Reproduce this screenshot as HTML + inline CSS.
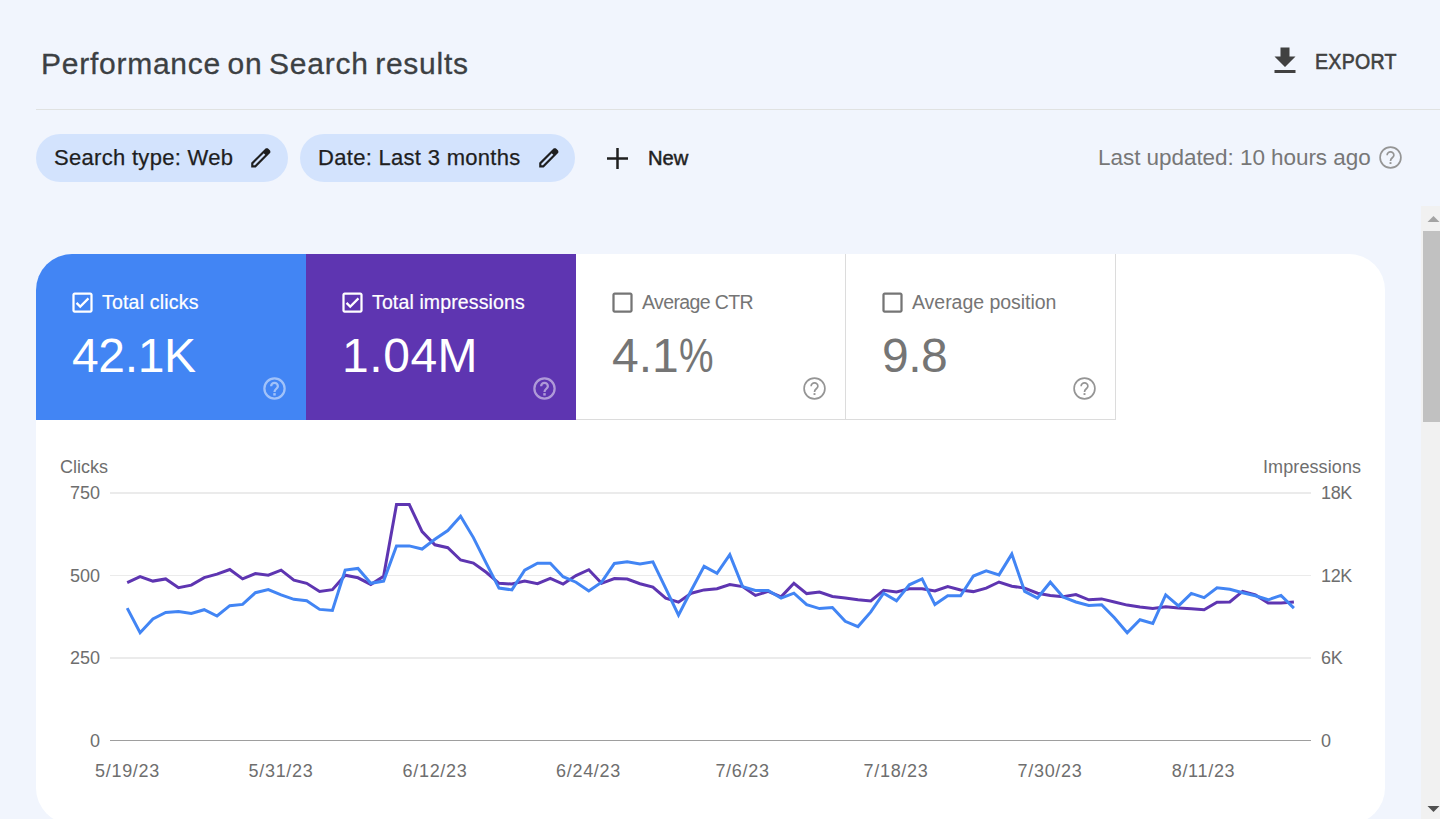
<!DOCTYPE html>
<html lang="en">
<head>
<meta charset="utf-8">
<title>Performance on Search results</title>
<style>
*{box-sizing:border-box;margin:0;padding:0}
html,body{width:1440px;height:819px;overflow:hidden;background:#f1f5fd}
body{position:relative;font-family:"Liberation Sans",sans-serif;color:#3c4043}
.abs{position:absolute;white-space:nowrap;line-height:1}
#title{left:41px;top:49.200px;font-size:30px;color:#3c4043;letter-spacing:0.750px;word-spacing:-2.500px;-webkit-text-stroke:0.300px #3c4043}
#hr{left:36px;top:109px;width:1404px;height:1px;background:#e0e2e1}
.chip{position:absolute;top:134px;height:48px;border-radius:24px;background:#d3e3fd}
.chiptxt{font-size:22px;color:#1f1f1f;top:147.300px;letter-spacing:0.300px;-webkit-text-stroke:0.250px #1f1f1f}
#export{left:1315px;top:52.400px;font-size:21.500px;color:#414141;letter-spacing:0.300px;-webkit-text-stroke:0.600px #414141;transform:scaleX(0.910);transform-origin:0 50%}
#updated{left:1098px;top:146.700px;font-size:22.500px;color:#777;letter-spacing:-0.050px}
#newtxt{left:647.500px;top:147px;font-size:21px;color:#1f1f1f;-webkit-text-stroke:0.500px #1f1f1f;transform:scaleX(0.960);transform-origin:0 50%}
#card{left:36px;top:254px;width:1349px;height:570px;border-radius:36px;background:#fff;overflow:hidden}
.tile{position:absolute;top:0;width:270px;height:166px}
.tlabel{font-size:19.500px;top:39px;left:66px}
.tvalue{font-size:48px;top:78px;left:36px}
.cb{position:absolute;left:36px;top:38px;width:21px;height:20px;border:2px solid #fff;border-radius:3px}
.ax{font-size:18px;color:#6e6e6e}
.yl{right:1340px;left:auto}
.yr{left:1321px;letter-spacing:-0.350px}
.xl{top:762px;transform:translateX(-50%);letter-spacing:0.700px}
.grid{position:absolute;left:110px;width:1201px;height:1.5px;background:#ebebeb}
#sbtrack{left:1421px;top:206px;width:25px;height:613px;background:#f1f1f1}
#sbthumb{left:1423px;top:231px;width:20px;height:191px;background:#c1c1c1}
</style>
</head>
<body>

<div id="title" class="abs">Performance on Search results</div>
<div id="hr" class="abs"></div>

<!-- export -->
<svg class="abs" style="left:1267px;top:42.7px" width="36" height="36" viewBox="0 0 24 24"><path fill="#414141" d="M19 9h-4V3H9v6H5l7 7 7-7zM5 18v2h14v-2H5z"/></svg>
<div id="export" class="abs">EXPORT</div>

<!-- chips -->
<div class="chip" style="left:36px;width:252px"></div>
<div class="abs chiptxt" id="chip1" style="left:54px">Search type: Web</div>
<svg class="abs pencil" style="left:247.800px;top:145.400px" width="25.600" height="25.600" viewBox="0 -960 960 960"><path fill="#1f1f1f" d="M200-200h57l391-391-57-57-391 391v57Zm-80 80v-170l528-527q12-11 26.500-17t30.500-6q16 0 31 6t26 18l55 56q12 11 17.500 26t5.500 30q0 16-5.500 30.500T817-647L290-120H120Zm640-584-56-56 56 56Zm-141 85-28-29 57 57-29-28Z"/></svg>

<div class="chip" style="left:300px;width:275px"></div>
<div class="abs chiptxt" id="chip2" style="left:318px">Date: Last 3 months</div>
<svg class="abs pencil" style="left:536px;top:145.400px" width="25.600" height="25.600" viewBox="0 -960 960 960"><path fill="#1f1f1f" d="M200-200h57l391-391-57-57-391 391v57Zm-80 80v-170l528-527q12-11 26.500-17t30.500-6q16 0 31 6t26 18l55 56q12 11 17.500 26t5.500 30q0 16-5.500 30.500T817-647L290-120H120Zm640-584-56-56 56 56Zm-141 85-28-29 57 57-29-28Z"/></svg>

<svg class="abs" style="left:607px;top:147.5px" width="21" height="21" viewBox="0 0 21 21"><path d="M10.5 0v21M0 10.500h21" stroke="#1f1f1f" stroke-width="2.500" fill="none"/></svg>
<div id="newtxt" class="abs">New</div>

<div id="updated" class="abs">Last updated: 10 hours ago</div>
<svg class="abs" style="left:1377px;top:144.4px;opacity:1" width="27" height="27" viewBox="0 0 24 24"><circle cx="12" cy="12" r="9.25" fill="none" stroke="#959595" stroke-width="1.5"/><path d="M9 10a3 3 0 0 1 6 0c0 2.250-3 2.250-3 5" fill="none" stroke="#959595" stroke-width="1.5"/><rect x="11.15" y="16.100" width="1.70" height="1.70" fill="#959595"/></svg>

<!-- scrollbar -->
<div id="sbtrack" class="abs"></div>
<div id="sbthumb" class="abs"></div>
<svg class="abs" style="left:1427px;top:215px" width="13" height="8" viewBox="0 0 13 8"><path d="M0.500 7L6.500 1L12.500 7z" fill="#a3a3a3"/></svg>
<svg class="abs" style="left:1427px;top:805px" width="13" height="8" viewBox="0 0 13 8"><path d="M0.500 1L6.500 7L12.500 1z" fill="#505050"/></svg>

<!-- card -->
<div id="card" class="abs">
  <div class="tile" style="left:0;background:#4285f4;color:#fff">
    <svg class="abs" style="left:32.600px;top:34.600px" width="27" height="27" viewBox="0 0 24 24"><path fill="#fff" d="M19 3H5c-1.100 0-2 .9-2 2v14c0 1.100.9 2 2 2h14c1.100 0 2-.9 2-2V5c0-1.100-.9-2-2-2zm0 16H5V5h14v14zM17.990 9l-1.410-1.420-6.590 6.590-2.580-2.570-1.420 1.410 4 3.990z"/></svg>
    <div class="abs tlabel" style="letter-spacing:0.200px;-webkit-text-stroke:0.200px #fff">Total clicks</div>
    <div class="abs tvalue" style="letter-spacing:-0.350px">42.1K</div>
    <svg class="abs" style="left:225px;top:120.9px;opacity:0.5" width="27" height="27" viewBox="0 0 24 24"><circle cx="12" cy="12" r="9.00" fill="none" stroke="#fff" stroke-width="2"/><path d="M9 10a3 3 0 0 1 6 0c0 2.250-3 2.250-3 5" fill="none" stroke="#fff" stroke-width="2"/><rect x="10.90" y="16.100" width="2.20" height="2.20" fill="#fff"/></svg>
  </div>
  <div class="tile" style="left:270px;background:#5e35b1;color:#fff">
    <svg class="abs" style="left:32.600px;top:34.600px" width="27" height="27" viewBox="0 0 24 24"><path fill="#fff" d="M19 3H5c-1.100 0-2 .9-2 2v14c0 1.100.9 2 2 2h14c1.100 0 2-.9 2-2V5c0-1.100-.9-2-2-2zm0 16H5V5h14v14zM17.990 9l-1.410-1.420-6.590 6.590-2.580-2.570-1.420 1.410 4 3.990z"/></svg>
    <div class="abs tlabel" style="letter-spacing:0.130px;-webkit-text-stroke:0.200px #fff">Total impressions</div>
    <div class="abs tvalue" style="letter-spacing:0.550px">1.04M</div>
    <svg class="abs" style="left:225px;top:120.9px;opacity:0.5" width="27" height="27" viewBox="0 0 24 24"><circle cx="12" cy="12" r="9.00" fill="none" stroke="#fff" stroke-width="2"/><path d="M9 10a3 3 0 0 1 6 0c0 2.250-3 2.250-3 5" fill="none" stroke="#fff" stroke-width="2"/><rect x="10.90" y="16.100" width="2.20" height="2.20" fill="#fff"/></svg>
  </div>
  <div class="tile" style="left:540px;color:#757575;border-right:1px solid #dcdcdc;border-bottom:1px solid #dcdcdc">
    <svg class="abs" style="left:32.600px;top:34.600px" width="27" height="27" viewBox="0 0 24 24"><path fill="#757575" d="M19 5v14H5V5h14m0-2H5c-1.100 0-2 .9-2 2v14c0 1.100.9 2 2 2h14c1.100 0 2-.9 2-2V5c0-1.100-.9-2-2-2z"/></svg>
    <div class="abs tlabel" style="letter-spacing:-0.620px">Average CTR</div>
    <div class="abs tvalue">4.1<span style="display:inline-block;transform:scaleX(0.810);transform-origin:0 50%">%</span></div>
    <svg class="abs" style="left:225px;top:120.9px;opacity:1" width="27" height="27" viewBox="0 0 24 24"><circle cx="12" cy="12" r="9.25" fill="none" stroke="#959595" stroke-width="1.5"/><path d="M9 10a3 3 0 0 1 6 0c0 2.250-3 2.250-3 5" fill="none" stroke="#959595" stroke-width="1.5"/><rect x="11.15" y="16.100" width="1.70" height="1.70" fill="#959595"/></svg>
  </div>
  <div class="tile" style="left:810px;color:#757575;border-right:1px solid #dcdcdc;border-bottom:1px solid #dcdcdc">
    <svg class="abs" style="left:32.600px;top:34.600px" width="27" height="27" viewBox="0 0 24 24"><path fill="#757575" d="M19 5v14H5V5h14m0-2H5c-1.100 0-2 .9-2 2v14c0 1.100.9 2 2 2h14c1.100 0 2-.9 2-2V5c0-1.100-.9-2-2-2z"/></svg>
    <div class="abs tlabel" style="letter-spacing:-0.030px">Average position</div>
    <div class="abs tvalue" style="letter-spacing:-0.500px">9.8</div>
    <svg class="abs" style="left:225px;top:120.9px;opacity:1" width="27" height="27" viewBox="0 0 24 24"><circle cx="12" cy="12" r="9.25" fill="none" stroke="#959595" stroke-width="1.5"/><path d="M9 10a3 3 0 0 1 6 0c0 2.250-3 2.250-3 5" fill="none" stroke="#959595" stroke-width="1.5"/><rect x="11.15" y="16.100" width="1.70" height="1.70" fill="#959595"/></svg>
  </div>
</div>

<!-- chart -->
<div class="abs ax" id="lclicks" style="left:60px;top:458px">Clicks</div>
<div class="abs ax" id="limpr" style="left:1263px;top:458px;letter-spacing:0.100px">Impressions</div>
<div class="grid" style="top:492px"></div>
<div class="grid" style="top:574.500px"></div>
<div class="grid" style="top:657px"></div>
<div class="grid" id="base" style="top:739.500px;height:1px;background:#9e9e9e"></div>
<div class="abs ax yl" id="y750" style="top:484px">750</div>
<div class="abs ax yl" id="y500" style="top:566.500px">500</div>
<div class="abs ax yl" id="y250" style="top:649px">250</div>
<div class="abs ax yl" id="y0" style="top:731.500px">0</div>
<div class="abs ax yr" id="r18" style="top:484px">18K</div>
<div class="abs ax yr" id="r12" style="top:566.500px">12K</div>
<div class="abs ax yr" id="r6" style="top:649px">6K</div>
<div class="abs ax yr" id="r0" style="top:731.500px">0</div>
<div class="abs ax xl" id="x0" style="left:127.500px">5/19/23</div>
<div class="abs ax xl" id="x1" style="left:281px">5/31/23</div>
<div class="abs ax xl" id="x2" style="left:435px">6/12/23</div>
<div class="abs ax xl" id="x3" style="left:588.500px">6/24/23</div>
<div class="abs ax xl" id="x4" style="left:742.500px">7/6/23</div>
<div class="abs ax xl" id="x5" style="left:896px">7/18/23</div>
<div class="abs ax xl" id="x6" style="left:1050px">7/30/23</div>
<div class="abs ax xl" id="x7" style="left:1203.500px">8/11/23</div>
<svg class="abs" id="lines" style="left:0;top:0" width="1440" height="819" viewBox="0 0 1440 819">
<polyline fill="none" stroke="#5e35b1" stroke-width="3" points="127.2,582.6 140.1,576.7 152.9,581.1 165.7,578.9 178.5,587.7 191.3,585.1 204.2,577.6 217.0,574.1 229.8,569.5 242.6,578.9 255.4,573.6 268.3,575.2 281.1,570.1 293.9,580.2 306.7,583.3 319.6,591.4 332.4,589.7 345.2,575.2 358.0,577.8 370.8,584.4 383.6,576.3 396.5,504.6 409.3,504.6 422.1,531.6 434.9,544.8 447.8,547.7 460.6,560.0 473.4,563.1 486.2,572.3 499.0,583.3 511.9,584.0 524.7,581.1 537.5,583.7 550.3,578.4 563.1,584.0 576.0,575.6 588.8,569.7 601.6,583.3 614.4,578.5 627.2,579.1 640.0,583.7 652.9,587.0 665.7,598.2 678.5,602.2 691.3,593.2 704.1,589.9 717.0,588.8 729.8,584.6 742.6,586.6 755.4,595.4 768.2,591.4 781.1,596.9 793.9,583.3 806.7,593.6 819.5,592.1 832.4,596.5 845.2,598.0 858.0,599.8 870.8,600.9 883.6,590.3 896.5,591.9 909.3,588.8 922.1,588.8 934.9,591.0 947.7,586.6 960.6,589.9 973.4,591.6 986.2,588.2 999.0,582.0 1011.8,586.2 1024.7,588.1 1037.5,593.2 1050.3,595.4 1063.1,596.7 1075.9,594.5 1088.8,599.8 1101.6,598.9 1114.4,602.0 1127.2,605.1 1140.0,607.0 1152.8,608.6 1165.7,606.8 1178.5,607.9 1191.3,608.8 1204.1,609.7 1217.0,602.3 1229.8,602.0 1242.6,591.4 1255.4,594.9 1268.2,603.1 1281.0,603.1 1293.9,602.0"/>
<polyline fill="none" stroke="#4285f4" stroke-width="3" points="127.2,608.1 140.1,632.7 152.9,618.9 165.7,612.5 178.5,611.4 191.3,613.4 204.2,609.7 217.0,616.0 229.8,605.7 242.6,604.4 255.4,592.7 268.3,589.5 281.1,594.9 293.9,599.3 306.7,600.7 319.6,609.4 332.4,610.5 345.2,570.1 358.0,568.4 370.8,583.3 383.6,581.1 396.5,545.9 409.3,545.9 422.1,549.0 434.9,539.3 447.8,530.5 460.6,516.3 473.4,537.6 486.2,563.1 499.0,588.1 511.9,589.9 524.7,570.1 537.5,563.3 550.3,563.3 563.1,576.7 576.0,582.2 588.8,591.0 601.6,582.2 614.4,563.5 627.2,561.8 640.0,564.0 652.9,561.8 665.7,588.4 678.5,615.2 691.3,590.3 704.1,566.4 717.0,573.4 729.8,554.7 742.6,586.6 755.4,590.5 768.2,590.5 781.1,598.2 793.9,593.2 806.7,604.6 819.5,608.6 832.4,607.5 845.2,621.3 858.0,626.6 870.8,611.9 883.6,593.2 896.5,600.9 909.3,584.8 922.1,578.9 934.9,604.6 947.7,595.8 960.6,595.8 973.4,576.0 986.2,570.8 999.0,574.9 1011.8,554.1 1024.7,591.4 1037.5,598.0 1050.3,582.2 1063.1,597.1 1075.9,602.0 1088.8,605.5 1101.6,604.8 1114.4,617.8 1127.2,632.7 1140.0,619.8 1152.8,623.5 1165.7,594.9 1178.5,605.9 1191.3,593.4 1204.1,597.6 1217.0,587.7 1229.8,589.2 1242.6,592.7 1255.4,595.8 1268.2,599.8 1281.0,595.4 1293.9,608.1"/>
</svg>

</body>
</html>
